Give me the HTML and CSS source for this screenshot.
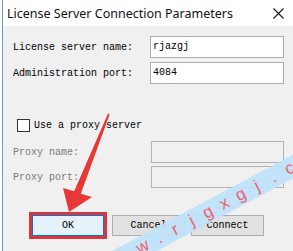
FILE: index.html
```html
<!DOCTYPE html>
<html lang="en">
<head>
    <meta charset="UTF-8">
    <title>License Server Connection Parameters</title>
    <link rel="stylesheet" href="styles.css">
</head>
<body>
    <div class="window">
        <div class="titlebar">
            <span class="title">License Server Connection Parameters</span>
            <svg class="close-icon" width="11" height="11" viewBox="0 0 11 11">
                <path d="M0.5 0.5 L10.5 10.5 M10.5 0.5 L0.5 10.5" stroke="#1a1a1a" stroke-width="1.1" fill="none"/>
            </svg>
        </div>

        <div class="dialog-body">
            <div class="fields">
                <label>License server name:</label>
                <div class="input">rjazgj</div>
                <label>Administration port:</label>
                <div class="input">4084</div>
            </div>

            <div class="check-row">
                <span class="checkbox"></span>
                <span>Use a proxy server</span>
            </div>

            <div class="fields proxy">
                <label class="disabled">Proxy name:</label>
                <div class="input disabled-input"></div>
                <label class="disabled">Proxy port:</label>
                <div class="input disabled-input"></div>
            </div>

            <div class="buttons">
                <button class="btn btn-ok">OK</button>
                <button class="btn">Cancel</button>
                <button class="btn">Connect</button>
            </div>
        </div>
    </div>

    <!-- annotation arrow -->
    <svg class="arrow" width="293" height="251" viewBox="0 0 293 251">
        <path d="M108 113.5 L109.6 114.6 L80.8 193.8 L92 197 L69 212 L63 188 L74.2 191.2 Z" fill="#e93636"/>
    </svg>

    <!-- site watermark (only the part that shows) -->
    <div class="watermark">
        <span>w</span><span>.</span><span>r</span><span>j</span><span>g</span><span>x</span><span>g</span><span>j</span><span>.</span><span>c</span>
    </div>
</body>
</html>
```

FILE: styles.css
```css
body {
    margin: 0;
    width: 293px;
    height: 251px;
    overflow: hidden;
    position: relative;
    background: #ffffff;
    font-family: 'Liberation Mono', monospace;
    font-size: 10px;
    color: #000;
}

.window {
    margin-left: 2px;
    height: 251px;
    border-left: 1px solid #7497c0;
    display: flex;
    flex-direction: column;
}

.titlebar {
    height: 26px;
    flex-shrink: 0;
    display: flex;
    align-items: center;
    justify-content: space-between;
    padding: 0 9px 0 4px;
    background: #ffffff;
}

.title {
    font-family: 'Noto Sans', sans-serif;
    font-size: 12.5px;
    color: #111;
}

.close-icon {
    display: block;
    margin-top: 1px;
}

.dialog-body {
    flex: 1;
    background: #f0f0f0;
    padding: 10px 9px 0 10px;
}

.fields {
    display: grid;
    grid-template-columns: 137px 134px;
    row-gap: 4px;
    align-items: center;
}

.fields label {
    white-space: nowrap;
}

.input {
    height: 22px;
    box-sizing: border-box;
    border: 1px solid #acacac;
    background: #ffffff;
    padding: 0 2px;
    line-height: 20px;
}

.fields.proxy {
    margin-top: 9px;
    row-gap: 3px;
}

.fields.proxy .input {
    margin-left: 1px;
    width: 133px;
}

.disabled {
    color: #7a7a7a;
}

.disabled-input {
    background: #f0f0f0;
    border-color: #b3b3b3;
}

.check-row {
    margin-top: 35px;
    margin-left: 4px;
    display: flex;
    align-items: center;
    gap: 4px;
    height: 13px;
}

.checkbox {
    width: 13px;
    height: 13px;
    box-sizing: border-box;
    border: 1px solid #333;
    background: #ffffff;
}

.buttons {
    margin-top: 27px;
    padding-left: 19px;
    display: flex;
    gap: 6px;
}

.btn {
    width: 73px;
    height: 21px;
    padding: 0;
    border: 1px solid #adadad;
    background: #e1e1e1;
    font-family: 'Liberation Mono', monospace;
    font-size: 10px;
    color: #000;
}

.btn-ok {
    width: 72px;
    margin-right: 2px;
    background: #e5f1fb;
    border-color: #0078d7;
    outline: 3px solid #d9363e;
}

.arrow {
    position: absolute;
    left: 0;
    top: 0;
}

.watermark {
    position: absolute;
    left: 66px;
    top: 197px;
    width: 300px;
    height: 21px;
    transform: rotate(-28deg);
    background: rgba(190, 226, 248, 0.92);
    display: flex;
    justify-content: center;
    align-items: center;
}

.watermark span {
    width: 18.5px;
    text-align: center;
    font-family: 'Liberation Sans', sans-serif;
    font-size: 17px;
    line-height: 21px;
    color: #f0606e;
}
```
